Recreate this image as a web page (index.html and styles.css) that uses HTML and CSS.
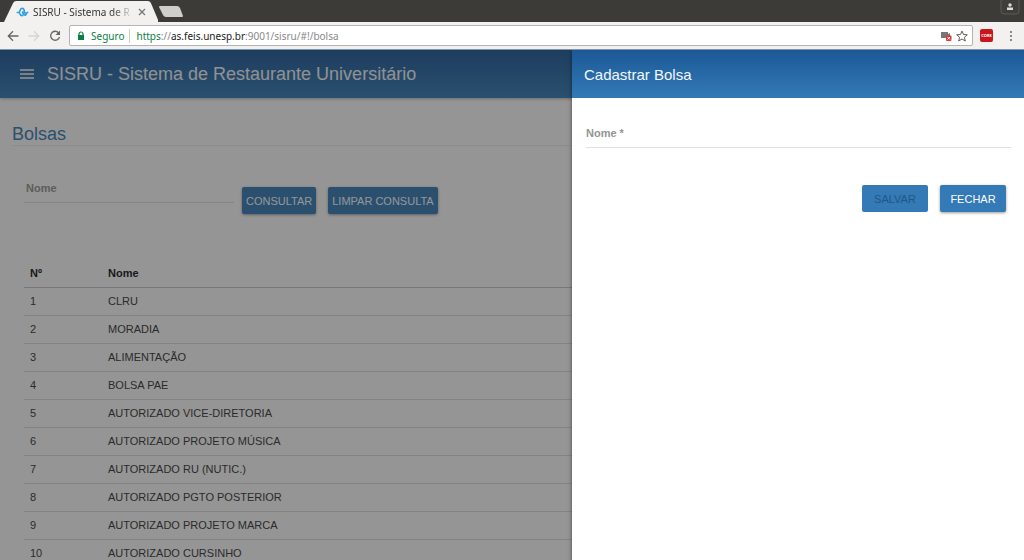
FILE: index.html
```html
<!DOCTYPE html>
<html lang="pt-BR">
<head>
<meta charset="utf-8">
<title>SISRU - Sistema de Restaurante Universitário</title>
<link rel="stylesheet" href="styles.css">
</head>
<body>
<div class="browser">
  <div class="tabs">
    <div class="tab">
      <svg class="tab-shape" viewBox="0 0 152 22" preserveAspectRatio="none" aria-hidden="true"><path d="M0 22 9 3Q10 1 12 1H142Q144 1 145 3L153 22Z" fill="#f2f1f0"/></svg>
      <svg class="favicon" viewBox="0 0 14 12" aria-hidden="true"><path d="M1.500 6.500H3C4.500 6.500 4 2 6.500 2S9 4.500 9 6 10.500 7.500 12.500 6.500M4 7.500C4.500 9.500 5.500 10 7 9.800M7 6C8 10 10.500 10 11 8.500" fill="none" stroke="#2f9fe3" stroke-width="1.800" stroke-linecap="round"/></svg>
      <span class="tab-title">SISRU - Sistema de R</span>
      <button class="tab-close" aria-label="Fechar aba"><svg viewBox="0 0 8 8"><path d="M1 1 7 7M7 1 1 7" stroke="#777" stroke-width="1.300"/></svg></button>
    </div>
    <button class="new-tab" aria-label="Nova aba"><svg viewBox="0 0 26 13"><path d="M2 1H19Q21 1 22 3L25 11Q25 12 24 12H8Q6 12 5 10L1 2Q1 1 2 1Z" fill="#cfcecb"/></svg></button>
    <button class="profile" aria-label="Perfil"><svg viewBox="0 0 20 16"><path d="M1 0V11Q1 14 4 14H16Q19 14 19 11V0" fill="#3f3e3a" stroke="#5c5a55"/><circle cx="10" cy="5" r="1.700" fill="#ddd"/><path d="M7 7.500H13V10H7Z" fill="#ddd"/></svg></button>
  </div>
  <div class="toolbar">
    <button class="tool" aria-label="Voltar"><svg viewBox="0 0 14 14"><path d="M12.500 7H2.500M7 2.300 2.300 7 7 11.700" fill="none" stroke="#666" stroke-width="1.300"/></svg></button>
    <button class="tool" aria-label="Avançar"><svg viewBox="0 0 14 14"><path d="M1.500 7H11.500M7 2.300 11.700 7 7 11.700" fill="none" stroke="#d4d4d4" stroke-width="1.300"/></svg></button>
    <button class="tool" aria-label="Recarregar"><svg viewBox="0 0 14 14"><path d="M10.500 3.700A4.500 4.500 0 1 0 11.500 8" fill="none" stroke="#666" stroke-width="1.300"/><path d="M12 1.500V6H7.500Z" fill="#666"/></svg></button>
    <div class="address">
      <svg class="lock" viewBox="0 0 8 10" aria-hidden="true"><path d="M2 5V3A2 2 0 0 1 6 3V5" fill="none" stroke="#0b8043" stroke-width="1.200"/><rect x="1" y="4" width="6" height="5" fill="#0b8043"/></svg>
      <span class="secure">Seguro</span>
      <span class="url"><span class="scheme">https</span>://<span class="host">as.feis.unesp.br</span>:9001/sisru/#!/bolsa</span>
      <button class="small" aria-label="Conteúdo bloqueado"><svg viewBox="0 0 12 12"><path d="M1 2H8V8H1Z" fill="#777"/><path d="M8 4 10 3V7H8Z" fill="#777"/><rect x="6" y="5.500" width="5.500" height="5.500" rx="1" fill="#d93a33"/><path d="M7.500 7 10 9.500M10 7 7.500 9.500" stroke="#fff"/></svg></button>
      <button class="small" aria-label="Favorito"><svg viewBox="0 0 12 12"><path d="M6 1 7.500 4.500 11.300 4.800 8.400 7.300 9.300 11 6 9 2.700 11 3.600 7.300.7 4.800 4.500 4.500Z" fill="none" stroke="#5f5f5f"/></svg></button>
    </div>
    <button class="cors" aria-label="CORS">CORS</button>
    <button class="more" aria-label="Menu"><svg viewBox="0 0 4 12"><g fill="#666"><circle cx="2" cy="2" r="1"/><circle cx="2" cy="6" r="1"/><circle cx="2" cy="10" r="1"/></g></svg></button>
  </div>
</div>
<div class="app">
  <div class="page">
    <header class="bar">
      <button class="burger" aria-label="Menu"><svg viewBox="0 0 14 10"><path d="M0 1H14M0 5H14M0 9H14" stroke="#fff" stroke-width="1.500"/></svg></button>
      <h1 class="bar-title">SISRU - Sistema de Restaurante Universitário</h1>
    </header>
    <main class="content">
      <h2 class="heading">Bolsas</h2>
      <form class="search">
        <div class="field"><label class="label" for="q">Nome</label><input class="input" id="q" type="text"></div>
        <div class="buttons">
          <button class="btn" type="button">CONSULTAR</button>
          <button class="btn" type="button">LIMPAR CONSULTA</button>
        </div>
      </form>
      <table class="list">
        <thead><tr><th class="num">Nº</th><th>Nome</th></tr></thead>
        <tbody>
          <tr><td>1</td><td>CLRU</td></tr>
          <tr><td>2</td><td>MORADIA</td></tr>
          <tr><td>3</td><td>ALIMENTAÇÃO</td></tr>
          <tr><td>4</td><td>BOLSA PAE</td></tr>
          <tr><td>5</td><td>AUTORIZADO VICE-DIRETORIA</td></tr>
          <tr><td>6</td><td>AUTORIZADO PROJETO MÚSICA</td></tr>
          <tr><td>7</td><td>AUTORIZADO RU (NUTIC.)</td></tr>
          <tr><td>8</td><td>AUTORIZADO PGTO POSTERIOR</td></tr>
          <tr><td>9</td><td>AUTORIZADO PROJETO MARCA</td></tr>
          <tr><td>10</td><td>AUTORIZADO CURSINHO</td></tr>
        </tbody>
      </table>
    </main>
  </div>
  <div class="backdrop"></div>
  <aside class="drawer">
    <header class="drawer-bar"><h2 class="drawer-title">Cadastrar Bolsa</h2></header>
    <form class="drawer-form">
      <div class="field"><label class="label" for="nome">Nome *</label><input class="input" id="nome" type="text" required></div>
      <div class="actions">
        <button class="btn wide" type="button" disabled>SALVAR</button>
        <button class="btn wide" type="button">FECHAR</button>
      </div>
    </form>
  </aside>
</div>
</body>
</html>
```
FILE: styles.css
```css
* { box-sizing: border-box; }
body {
  margin: 0;
  height: 100vh;
  display: flex;
  flex-direction: column;
  overflow: hidden;
  font-family: "Liberation Sans", Arial, sans-serif;
  font-size: 11px;
  background: #fff;
}
button { padding: 0; border: 0; background: none; font: inherit; }
svg { display: block; }
h1, h2 { margin: 0; font-weight: 400; }

.browser { flex: none; font-family: "Noto Sans", sans-serif; font-size: 10px; border-bottom: 1px solid #8294a8; }
.tabs { display: flex; height: 22px; background: #3c3b37; }
.tab { position: relative; display: flex; align-items: center; width: 154px; margin-left: 4px; padding: 2px 12px 0 12px; }
.tab-shape { position: absolute; inset: 0; width: 100%; height: 100%; }
.favicon { position: relative; flex: none; width: 13px; height: 12px; }
.tab-title {
  position: relative;
  flex: 1;
  margin-left: 4px;
  white-space: nowrap;
  color: #333;
  -webkit-mask-image: linear-gradient(90deg, #000 78%, transparent);
  mask-image: linear-gradient(90deg, #000 78%, transparent);
}
.tab-close { position: relative; flex: none; margin-left: 4px; }
.tab-close svg { width: 8px; height: 8px; }
.new-tab svg { width: 26px; height: 13px; }
.profile { align-self: flex-start; margin-left: auto; margin-right: 4px; }
.profile svg { width: 20px; height: 16px; }

.toolbar { display: flex; align-items: center; height: 27px; padding: 0 11px 0 6px; background: #f2f1f0; }
.tool { margin-right: 7px; }
.tool svg { width: 14px; height: 14px; }
.address {
  flex: 1;
  display: flex;
  align-items: center;
  height: 21px;
  padding: 0 4px 0 7px;
  border: 1px solid #b5b4b2;
  border-radius: 2px;
  background: #fff;
  color: #888;
}
.lock { width: 8px; height: 10px; }
.secure { margin-left: 6px; padding-right: 5px; border-right: 1px solid #ccc; color: #0b8043; line-height: 14px; }
.url { flex: 1; margin-left: 6px; }
.scheme { color: #0b8043; }
.host { color: #222; }
.small { margin-left: 4px; }
.small svg { width: 12px; height: 12px; }
.cors { width: 13px; height: 13px; margin-left: 7px; border-radius: 2px; background: #c9151b; color: #fff; font-size: 4px; font-weight: 700; line-height: 13px; }
.more { margin-left: 16px; }
.more svg { width: 4px; height: 12px; }

.app { position: relative; flex: 1; min-height: 0; overflow: hidden; }
.bar, .drawer-bar {
  display: flex;
  align-items: center;
  height: 48px;
  background: linear-gradient(#1b5896, #337ab7);
  color: #f4f8fc;
}
.bar { padding-left: 20px; box-shadow: 0 1px 3px rgba(0, 0, 0, .3); }
.burger svg { width: 14px; height: 10px; }
.bar-title { margin-left: 13px; font-size: 18px; }
.content { padding: 24px 12px; }
.heading { height: 24px; border-bottom: 1px solid #eee; color: #337ab7; font-size: 18px; line-height: 24px; }
.search { display: flex; align-items: flex-start; padding: 39px 12px 0; }
.search .field { width: 210px; }
.buttons { display: flex; gap: 12px; padding: 2px 0 0 8px; }
.field { position: relative; }
.label { position: absolute; left: 2px; top: -4px; color: #949494; font-weight: 700; line-height: 14px; }
.input { display: block; width: 100%; height: 18px; border: 0; border-bottom: 1px solid #e0e0e0; outline: 0; background: transparent; font: inherit; }
.btn {
  height: 27px;
  padding: 0 4px;
  border-radius: 2px;
  background: #337ab7;
  color: #fff;
  box-shadow: 0 1px 3px rgba(0, 0, 0, .4);
}
.btn:disabled { color: #245682; box-shadow: none; }
.wide { width: 66px; }
.list { width: 100%; margin: 44px 0 0 12px; border-collapse: collapse; color: #333; }
.list th { height: 29px; padding: 2px 6px 0; border-bottom: 1px solid #c8c8c8; color: #111; text-align: left; }
.list td { height: 28px; padding: 0 6px; border-bottom: 1px solid #ddd; }
.list .num { width: 78px; }

.backdrop { position: absolute; inset: 0; background: rgba(33, 33, 33, .48); }
.drawer { position: absolute; top: 0; right: 0; bottom: 0; width: 452px; background: #fff; box-shadow: 0 2px 4px rgba(0, 0, 0, .5); }
.drawer-bar { padding-left: 12px; }
.drawer-title { font-size: 15px; }
.drawer-form { padding: 32px 13px 0 14px; }
.drawer-form .label { left: 0; }
.actions { display: flex; justify-content: flex-end; gap: 12px; padding: 37px 5px 0 0; }
```
